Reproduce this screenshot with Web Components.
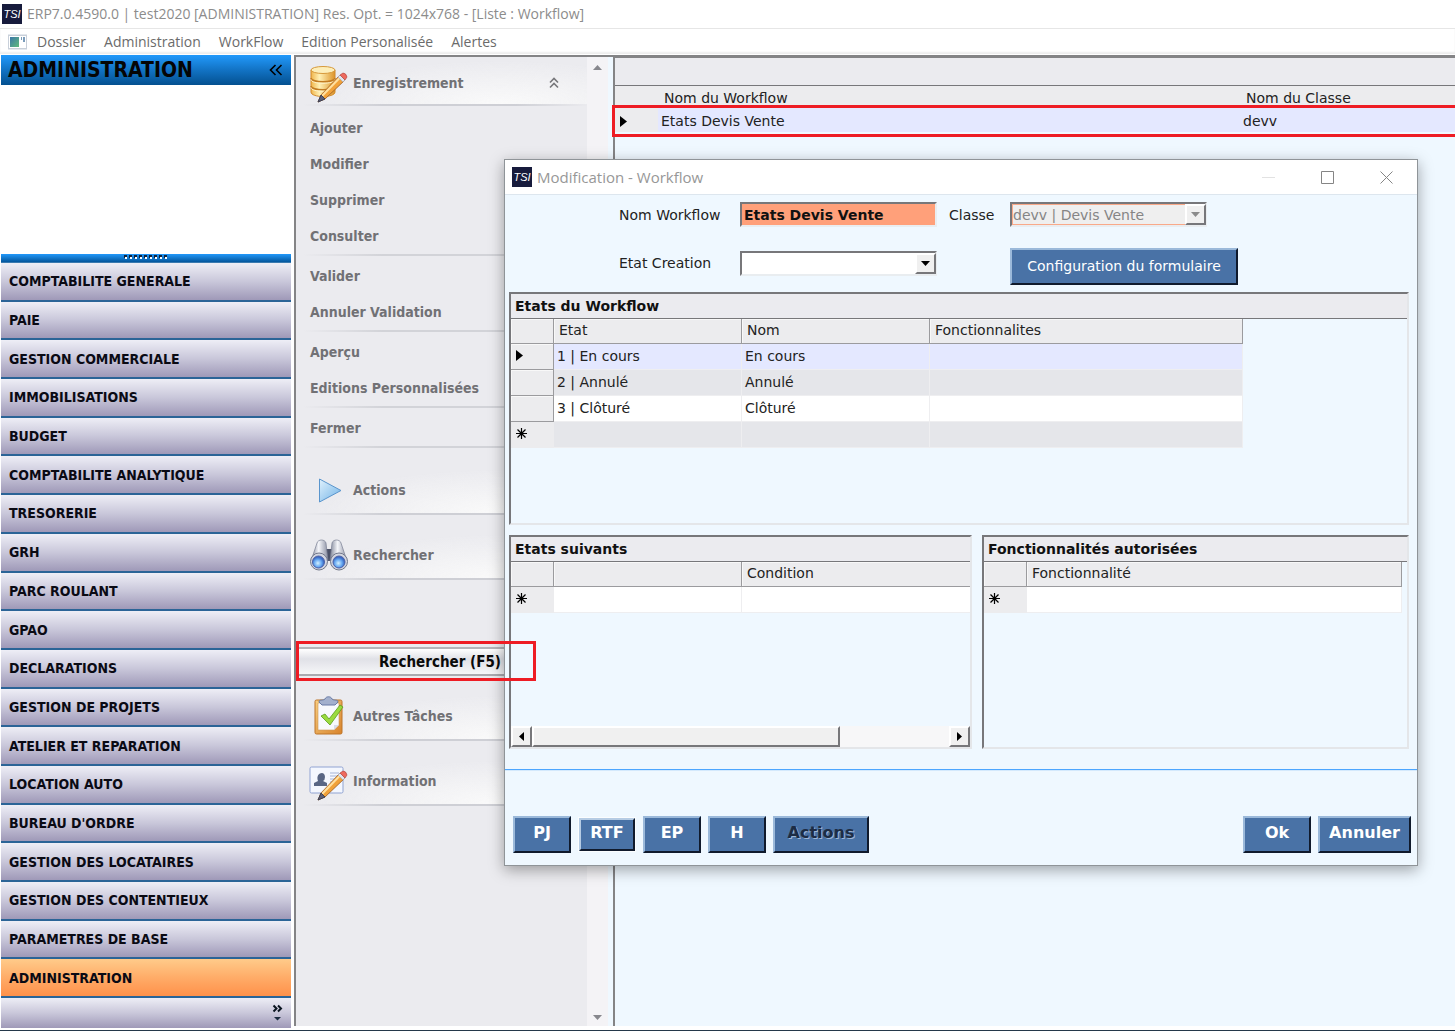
<!DOCTYPE html>
<html lang="fr">
<head>
<meta charset="utf-8">
<meta name="viewport" content="width=device-width, initial-scale=1">
<title>ERP7.0.4590.0 - Workflow</title>
<style>
    html, body {
        height: 100%;
        margin: 0;
    }
    body {
        --ui: "DejaVu Sans", "Liberation Sans", sans-serif;
        --ui-narrow: "DejaVu Sans Condensed", "Noto Sans", sans-serif;
        --system: "Open Sans", "Noto Sans", sans-serif;
        --panel: #ebebef;
        --ice: #eff8ff;
        --line: #848486;
        overflow: hidden;
        font: 14px/16px var(--ui);
        color: #222;
        background: #fff;
    }
</style>
</head>
<body>
<erp-desktop></erp-desktop>

<script>
/* Small dark logo used in the title bars */
class TsiLogo extends HTMLElement {
    connectedCallback() {
        this.attachShadow({ mode: 'open' });
        this.shadowRoot.innerHTML = `
            <style>
                :host {
                    display: flex;
                    align-items: center;
                    justify-content: center;
                    flex: none;
                    width: 20px;
                    height: 20px;
                    overflow: hidden;
                    background: #171b3c;
                    color: #fff;
                    font: italic 11px/20px "Liberation Sans", sans-serif;
                }
            </style>
            <span>TSI</span>
        `;
    }
}
customElements.define('tsi-logo', TsiLogo);

class AppTitle extends HTMLElement {
    connectedCallback() {
        this.attachShadow({ mode: 'open' });
        this.shadowRoot.innerHTML = `
            <style>
                :host {
                    display: flex;
                    align-items: center;
                    gap: 5px;
                    height: 29px;
                    padding-left: 2px;
                    box-sizing: border-box;
                    border-bottom: 1px solid #e6e6e6;
                    color: #8c8c8c;
                    font: 14px/20px var(--system);
                }
            </style>
            <tsi-logo></tsi-logo>
            <span><slot></slot></span>
        `;
    }
}
customElements.define('app-title', AppTitle);

class MenuBar extends HTMLElement {
    connectedCallback() {
        this.attachShadow({ mode: 'open' });
        this.shadowRoot.innerHTML = `
            <style>
                :host {
                    display: block;
                    font: 14px/18px var(--system);
                }
                nav {
                    display: flex;
                    align-items: center;
                    gap: 18px;
                    height: 25px;
                    padding-left: 8px;
                    box-shadow: inset 0 -2px 2px #eee;
                }
                svg {
                    margin-right: -9px;
                }
                a {
                    color: #6b6b6b;
                    text-decoration: none;
                }
            </style>
            <nav>
                <svg width="20" height="16" viewBox="0 0 20 16" aria-hidden="true">
                    <defs><linearGradient id="g" x2="1" y2="1"><stop stop-color="#3c77a8"/><stop offset="1" stop-color="#5fbb7c"/></linearGradient></defs>
                    <path d="M0 .5h19v15H0z" fill="#c9d0da"/>
                    <path d="M1 2h17v12H1z" fill="#fff"/>
                    <path d="M2 3h9v10H2z" fill="url(#g)"/>
                    <path d="M13 3h1v3h-1zM15 3h2v5h-2z" fill="#7b9cba"/>
                </svg>
                <a href="#">Dossier</a>
                <a href="#">Administration</a>
                <a href="#">WorkFlow</a>
                <a href="#">Edition Personalisée</a>
                <a href="#">Alertes</a>
            </nav>
        `;
    }
}
customElements.define('menu-bar', MenuBar);

/* Left navigation */
class NavEntry extends HTMLElement {
    connectedCallback() {
        this.attachShadow({ mode: 'open' });
        this.shadowRoot.innerHTML = `
            <style>
                :host {
                    display: flex;
                    flex: 1;
                    min-height: 0;
                }
                button {
                    flex: 1;
                    padding: 0 0 0 8px;
                    border: 0;
                    border-bottom: 2px solid #2b6497;
                    background: linear-gradient(#eeeef6, #c9c7da 50%, #9f99b8);
                    color: #0a0a14;
                    font: bold 14px/16px var(--ui-narrow);
                    text-align: left;
                }
                :host([active]) button {
                    background: linear-gradient(#ffcb8a, #ffac68 50%, #ff914a);
                }
            </style>
            <button type="button"><slot></slot></button>
        `;
    }
}
customElements.define('nav-entry', NavEntry);

class NavSidebar extends HTMLElement {
    connectedCallback() {
        this.attachShadow({ mode: 'open' });
        this.shadowRoot.innerHTML = `
            <style>
                :host {
                    display: flex;
                    flex-direction: column;
                    padding: 1px 3px 2px 1px;
                }
                header {
                    display: flex;
                    align-items: center;
                    justify-content: space-between;
                    height: 30px;
                    padding: 0 8px 0 7px;
                    box-sizing: border-box;
                    background: linear-gradient(#2299fb, #1273c4 50%, #045090);
                }
                h1 {
                    margin: 0;
                    color: #050505;
                    font: bold 21px/28px var(--ui-narrow);
                }
                button {
                    display: flex;
                    padding: 0;
                    border: 0;
                    background: none;
                }
                .blank {
                    height: 169px;
                }
                .grip {
                    display: flex;
                    justify-content: center;
                    height: 8px;
                    border-bottom: 1px solid #3a7ab0;
                    background: linear-gradient(#2299fb, #04569c);
                }
                .list {
                    display: flex;
                    flex: 1;
                    flex-direction: column;
                    min-height: 0;
                }
                footer {
                    display: flex;
                    justify-content: flex-end;
                    height: 30px;
                    padding: 6px 8px 0 0;
                    box-sizing: border-box;
                    background: linear-gradient(#eeeef6, #c9c7da 50%, #9f99b8);
                }
            </style>
            <header>
                <h1>ADMINISTRATION</h1>
                <button type="button" aria-label="Réduire">
                    <svg width="14" height="12" viewBox="0 0 14 12" fill="none" stroke="#000" stroke-width="1.600"><path d="M6.500 1 1.500 6l5 5M12.500 1l-5 5 5 5"/></svg>
                </button>
            </header>
            <div class="blank"></div>
            <div class="grip">
                <svg width="45" height="6" viewBox="0 0 45 6" aria-hidden="true">
                    <path d="M0 2.500h45" stroke="#10233c" stroke-width="3" stroke-dasharray="3 2"/>
                    <path d="M1 4h44" stroke="#fff" stroke-width="2" stroke-dasharray="2 3"/>
                </svg>
            </div>
            <div class="list"><slot></slot></div>
            <footer>
                <button type="button" aria-label="Configurer">
                    <svg width="11" height="18" viewBox="0 0 11 18"><path d="M1.500 1.500 4.500 4.500l-3 3M6 1.500l3 3-3 3" fill="none" stroke="#0a1420" stroke-width="2"/><path d="M2 13h7l-3.500 3.500z" fill="#1a2a3e"/></svg>
                </button>
            </footer>
        `;
    }
}
customElements.define('nav-sidebar', NavSidebar);

/* Icons of the task groups, all on a 40px square */
const PENCIL = `
    <path d="M31 12 12 32l-3 7 7-3 20-19z" fill="#f1a23a" stroke="#9a5a1e" stroke-width=".8"/>
    <path d="M32.500 13 13 33" stroke="#ffe0a0" stroke-width="2"/>
    <path d="m12 32-3 7 7-3z" fill="#5a5f78" stroke="#3d3f52"/>
    <path d="m29 14 5 5 2-2-5-5z" fill="#dfe4ee" stroke="#9aa0b4" stroke-width=".5"/>
    <path d="m31 12 3-2q3 0 4 4l-2 3z" fill="#ee6a5e" stroke="#b54742" stroke-width=".7"/>`;

const ICONS = {
    database: `
        <defs><linearGradient id="g"><stop stop-color="#f0b54a"/><stop offset=".35" stop-color="#fff0b4"/><stop offset="1" stop-color="#dd9428"/></linearGradient></defs>
        <path d="M2 7v22c0 6 24 6 24 0V7z" fill="url(#g)" stroke="#d28a2a"/>
        <path d="M2 15c0 5 24 5 24 0M2 23c0 5 24 5 24 0" fill="none" stroke="#c37c22" stroke-width="1.500"/>
        <path d="M2 16.500c0 5 24 5 24 0M2 24.500c0 5 24 5 24 0" fill="none" stroke="#fff3cb"/>
        <ellipse cx="14" cy="7" rx="12" ry="3.500" fill="#fdeeb9" stroke="#d79a3c"/>${PENCIL}`,
    play: `
        <defs><linearGradient id="g" y2="1"><stop stop-color="#e0f1fd"/><stop offset="1" stop-color="#6fb2e6"/></linearGradient></defs>
        <path d="M10.500 9v23L32 20.500z" fill="url(#g)" stroke="#5a95cd"/>`,
    binoculars: `
        <defs>
            <linearGradient id="g"><stop stop-color="#7f8598"/><stop offset=".45" stop-color="#f5f6fa"/><stop offset="1" stop-color="#8a8fa2"/></linearGradient>
            <radialGradient id="l" cx=".45" cy=".6"><stop stop-color="#d3f0ff"/><stop offset=".6" stop-color="#69aaf2"/><stop offset="1" stop-color="#3a6ac4"/></radialGradient>
        </defs>
        <path d="M16 14h8v12h-8z" fill="#4a5066"/>
        <path d="M8 8c1-4 8-4 9 0l2 18H2z" fill="url(#g)" stroke="#7a8094" stroke-width=".7"/>
        <path d="M23 8c1-4 8-4 9 0l6 18H21z" fill="url(#g)" stroke="#7a8094" stroke-width=".7"/>
        <circle cx="10" cy="26.500" r="8.500" fill="#d3d6e0" stroke="#71778a"/>
        <circle cx="30" cy="26.500" r="8.500" fill="#d3d6e0" stroke="#71778a"/>
        <circle cx="9.500" cy="27" r="6" fill="url(#l)" stroke="#4c60a6"/>
        <circle cx="30" cy="27" r="6" fill="url(#l)" stroke="#4c60a6"/>`,
    clipboard: `
        <defs><linearGradient id="g" x2="1" y2="1"><stop stop-color="#f8ce80"/><stop offset="1" stop-color="#d8832c"/></linearGradient></defs>
        <rect x="6" y="4" width="27" height="34" rx="1.500" fill="url(#g)" stroke="#bd7429"/>
        <path d="M9 7h21v22l-5 5H9z" fill="#f8f9fd" stroke="#cf9857" stroke-width=".6"/>
        <path d="M30 29h-5v5" fill="#d9dcea"/>
        <path d="M10 6c0-3 4-1 6-3 1-3 6-3 7 0 2 2 6 0 6 3l-3 3H13z" fill="#a3b0cd" stroke="#687ba6"/>
        <path d="m12 20 4-2 4 5L31 9l3 2-13 18z" fill="#9bdb3f" stroke="#5c9c20" stroke-width=".8"/>`,
    card: `
        <rect x="1" y="6" width="33" height="26" rx="1.500" fill="#f4f7fe" stroke="#90a3d2"/>
        <path d="M5 25v-3l4-2c-3-8 7-11 7-4q0 3-2 4l4 2v3z" fill="#596684"/>
        <path d="M21 12h9M21 15h9M21 18h8M21 21h5" stroke="#a5b4d7"/>${PENCIL}`
};

class TaskGroup extends HTMLElement {
    connectedCallback() {
        this.attachShadow({ mode: 'open' });
        this.shadowRoot.innerHTML = `
            <style>
                :host {
                    display: block;
                    margin-top: 16px;
                }
                :host([first]) {
                    margin-top: 0;
                }
                header {
                    display: flex;
                    align-items: center;
                    gap: 4px;
                    height: 49px;
                    padding: 1px 28px 0 13px;
                    box-sizing: border-box;
                    border-bottom: 2px solid;
                    border-image: linear-gradient(90deg, transparent 3%, #cecfd5 30%, #cecfd5 75%, transparent) 2;
                    background: radial-gradient(ellipse at 70% 100%, #fafafa, transparent 65%);
                }
                :host([first]) header {
                    padding-top: 4px;
                }
                h2 {
                    flex: 1;
                    margin: 0;
                    font: bold 14px/16px var(--ui-narrow);
                    color: #717175;
                }
                button {
                    display: flex;
                    padding: 0;
                    border: 0;
                    background: none;
                }
            </style>
            <header>
                <svg width="40" height="40" viewBox="0 0 40 40" aria-hidden="true">${ICONS[this.getAttribute('icon')]}</svg>
                <h2>${this.getAttribute('label')}</h2>
                ${this.hasAttribute('first') ? `
                <button type="button" aria-label="Replier">
                    <svg width="10" height="12" viewBox="0 0 10 12" fill="none" stroke="#77777b" stroke-width="1.600"><path d="m1 5.500 4-4 4 4M1 10.500l4-4 4 4"/></svg>
                </button>` : ''}
            </header>
            <slot></slot>
        `;
    }
}
customElements.define('task-group', TaskGroup);

class TaskLink extends HTMLElement {
    connectedCallback() {
        this.attachShadow({ mode: 'open' });
        this.shadowRoot.innerHTML = `
            <style>
                :host {
                    display: block;
                }
                a {
                    display: block;
                    padding-left: 14px;
                    color: #717175;
                    font: bold 14px/36px var(--ui-narrow);
                    text-decoration: none;
                }
                :host([last]) {
                    padding-bottom: 2px;
                }
                :host([last]) a {
                    border-bottom: 2px solid;
                    border-image: linear-gradient(90deg, transparent 3%, #d2d3d8 30%, #d2d3d8 75%, transparent) 2;
                }
            </style>
            <a href="#"><slot></slot></a>
        `;
    }
}
customElements.define('task-link', TaskLink);

class TaskPanel extends HTMLElement {
    connectedCallback() {
        this.attachShadow({ mode: 'open' });
        this.shadowRoot.innerHTML = `
            <style>
                :host {
                    display: flex;
                    box-sizing: border-box;
                    border-top: 2px solid var(--line);
                    border-left: 2px solid var(--line);
                    background: var(--ice);
                }
                .tasks {
                    flex: 1;
                    background: var(--panel);
                }
                .links {
                    padding-top: 4px;
                }
                .search {
                    display: block;
                    width: 100%;
                    height: 29px;
                    margin: 67px 0 14px;
                    padding: 0 86px 0 0;
                    border: 0;
                    border-top: 2px solid #b5b5ba;
                    border-bottom: 2px solid #aaaab0;
                    background: linear-gradient(#fff, #e0e1e7 40%, #f6f6f8);
                    color: #0a0a0a;
                    font: bold 15px/18px var(--ui-narrow);
                    text-align: right;
                }
                .scroll {
                    display: flex;
                    flex-direction: column;
                    justify-content: space-between;
                    align-items: center;
                    width: 21px;
                    margin-right: 5px;
                    padding: 8px 0 6px;
                    background: #f4f3f6;
                }
            </style>
            <div class="tasks">
                <task-group first icon="database" label="Enregistrement">
                    <div class="links">
                        <task-link>Ajouter</task-link>
                        <task-link>Modifier</task-link>
                        <task-link>Supprimer</task-link>
                        <task-link last>Consulter</task-link>
                        <task-link>Valider</task-link>
                        <task-link last>Annuler Validation</task-link>
                        <task-link>Aperçu</task-link>
                        <task-link last>Editions Personnalisées</task-link>
                        <task-link last>Fermer</task-link>
                    </div>
                </task-group>
                <task-group icon="play" label="Actions"></task-group>
                <task-group icon="binoculars" label="Rechercher"></task-group>
                <button class="search" type="button">Rechercher (F5)</button>
                <task-group icon="clipboard" label="Autres Tâches"></task-group>
                <task-group icon="card" label="Information"></task-group>
            </div>
            <div class="scroll" aria-hidden="true">
                <svg width="9" height="5"><path d="M0 5 4.500 0 9 5z" fill="#87878d"/></svg>
                <svg width="9" height="5"><path d="M0 0h9L4.500 5z" fill="#87878d"/></svg>
            </div>
        `;
    }
}
customElements.define('task-panel', TaskPanel);

/* Workflow list behind the dialog */
class WorkflowList extends HTMLElement {
    connectedCallback() {
        this.attachShadow({ mode: 'open' });
        this.shadowRoot.innerHTML = `
            <style>
                :host {
                    display: block;
                    box-sizing: border-box;
                    border-top: 3px solid var(--line);
                    border-left: 2px solid var(--line);
                    background: var(--ice);
                }
                .bar {
                    height: 27px;
                    border-bottom: 1px solid #77777a;
                    background: var(--panel);
                }
                table {
                    width: 100%;
                    table-layout: fixed;
                    border-collapse: collapse;
                }
                th, td {
                    height: 20px;
                    padding: 2px 3px 0;
                    font-weight: normal;
                    text-align: left;
                }
                th {
                    padding-left: 6px;
                    background: #ececee;
                }
                td {
                    height: 22px;
                    background: #e4e8ff;
                }
                td:first-child {
                    padding-left: 5px;
                    background: #ececee;
                }
                svg {
                    display: block;
                }
            </style>
            <div class="bar"></div>
            <table>
                <colgroup><col style="width: 43px"><col style="width: 582px"><col></colgroup>
                <thead><tr><th></th><th>Nom du Workflow</th><th>Nom du Classe</th></tr></thead>
                <tbody><tr><td><svg width="7" height="11"><path d="M0 0v11l7-5.500z"/></svg></td><td>Etats Devis Vente</td><td>devv</td></tr></tbody>
            </table>
        `;
    }
}
customElements.define('workflow-list', WorkflowList);

class ErpButton extends HTMLElement {
    connectedCallback() {
        this.attachShadow({ mode: 'open' });
        this.shadowRoot.innerHTML = `
            <style>
                :host {
                    display: inline-flex;
                    height: 37px;
                }
                button {
                    flex: 1;
                    padding: 0 0 3px;
                    border: 2px solid;
                    border-color: #9bb9da #101a2c #101a2c #9bb9da;
                    background: #4972a6;
                    color: #fff;
                    font: bold 16px/20px var(--ui);
                }
                :host([plain]) button {
                    padding: 0;
                    font: 14px/16px var(--ui);
                }
                :host([focused]) {
                    height: 33px;
                }
                :host([focused]) button {
                    border-color: #b6cce4 #101a2c #101a2c #b6cce4;
                    box-shadow: 0 0 0 1px #fbfdfe;
                }
                button:disabled {
                    color: #1d2c44;
                    text-shadow: 1px 1px #9cb6d6;
                }
            </style>
            <button type="button" ${this.hasAttribute('disabled') ? 'disabled' : ''}><slot></slot></button>
        `;
    }
}
customElements.define('erp-button', ErpButton);

class WorkflowForm extends HTMLElement {
    connectedCallback() {
        this.attachShadow({ mode: 'open' });
        this.shadowRoot.innerHTML = `
            <style>
                :host {
                    display: block;
                }
                form {
                    display: grid;
                    grid-template-columns: 121px 197px 73px 228px;
                    grid-template-rows: 39px 58px;
                    align-items: center;
                    margin-left: 114px;
                }
                .classe {
                    padding-left: 12px;
                }
                input, select {
                    width: 100%;
                    height: 25px;
                    padding: 0 2px;
                    box-sizing: border-box;
                    border: 2px solid;
                    border-color: #77777a #e9edf0 #e9edf0 #77777a;
                    border-radius: 0;
                    outline: 0;
                    background: #fff;
                    color: #111;
                    font: 14px/16px var(--ui);
                }
                input {
                    background: #ffa07a;
                    font-weight: bold;
                }
                select {
                    appearance: none;
                }
                select:disabled {
                    opacity: 1;
                    padding: 0 1px;
                    background: #efefef;
                    box-shadow: inset 0 0 0 1px #f9a989;
                    color: #858585;
                }
                .combo {
                    display: grid;
                    width: 197px;
                }
                .combo > * {
                    grid-area: 1 / 1;
                }
                .combo i {
                    display: flex;
                    align-items: center;
                    justify-content: center;
                    justify-self: end;
                    align-self: center;
                    width: 21px;
                    height: 21px;
                    margin-right: 1px;
                    box-sizing: border-box;
                    border: 2px solid;
                    border-color: #fff #77777a #77777a #fff;
                    background: #f0f0f0;
                    pointer-events: none;
                }
                .etat {
                    grid-row: 2;
                }
                erp-button {
                    grid-column: 4;
                    margin-top: 6px;
                }
            </style>
            <form>
                <label for="nom">Nom Workflow</label>
                <input id="nom" type="text" value="Etats Devis Vente">
                <label class="classe" for="classe">Classe</label>
                <div class="combo">
                    <select id="classe" disabled><option>devv | Devis Vente</option></select>
                    <i><svg width="9" height="5"><path d="M0 0h9L4.500 5z" fill="#8b8b8b"/></svg></i>
                </div>
                <label class="etat" for="etat">Etat Creation</label>
                <div class="combo">
                    <select id="etat"><option></option></select>
                    <i><svg width="9" height="5"><path d="M0 0h9L4.500 5z"/></svg></i>
                </div>
                <erp-button plain>Configuration du formulaire</erp-button>
            </form>
        `;
    }
}
customElements.define('workflow-form', WorkflowForm);

/* Sunken panel with a caption; the grid goes in the slot */
class GridPanel extends HTMLElement {
    connectedCallback() {
        this.attachShadow({ mode: 'open' });
        this.shadowRoot.innerHTML = `
            <style>
                :host {
                    display: flex;
                    flex-direction: column;
                    min-width: 0;
                    box-sizing: border-box;
                    overflow: hidden;
                    border: 2px solid;
                    border-color: #77777a #e4e6e9 #e4e6e9 #77777a;
                    background: var(--ice);
                }
                h3 {
                    margin: 0;
                    padding: 0 4px;
                    border-bottom: 1px solid #77777a;
                    background: var(--panel);
                    color: #111;
                    font: bold 14px/24px var(--ui);
                }
            </style>
            <h3>${this.getAttribute('caption')}</h3>
            <slot></slot>
        `;
    }
}
customElements.define('grid-panel', GridPanel);

class DataGrid extends HTMLElement {
    connectedCallback() {
        const columns = JSON.parse(this.getAttribute('columns'));
        const rows = JSON.parse(this.getAttribute('rows') || '[]');
        const arrow = '<svg width="7" height="11"><path d="M0 0v11l7-5.500z"/></svg>';
        const star = '<svg width="11" height="11" stroke="#000" stroke-width="1.200"><path d="M5.500 0v11M0 5.500h11M1.500 1.500l8 8M9.500 1.500l-8 8"/></svg>';

        this.attachShadow({ mode: 'open' });
        this.shadowRoot.innerHTML = `
            <style>
                :host {
                    display: block;
                }
                table {
                    width: 100%;
                    table-layout: fixed;
                    border-collapse: separate;
                    border-spacing: 0;
                }
                th, td {
                    height: 26px;
                    padding: 0 3px 2px;
                    box-sizing: border-box;
                    font-weight: normal;
                    text-align: left;
                    white-space: nowrap;
                }
                thead th {
                    height: 25px;
                    padding-left: 5px;
                }
                th {
                    border-right: 1px solid #9b9b9e;
                    border-bottom: 1px solid #9b9b9e;
                    background: #ececee;
                    box-shadow: inset 1px 1px #f8f8f8;
                }
                tbody tr:last-child th {
                    border-color: #ececee;
                    box-shadow: none;
                }
                tbody th svg {
                    display: block;
                    margin-left: 2px;
                }
                td {
                    border-right: 1px solid #eeeef0;
                    border-bottom: 1px solid #eeeef0;
                    background: #fff;
                }
                tr:nth-child(even) td {
                    background: #e5e6ea;
                }
                tr.current td {
                    background: #e4e8ff;
                }
            </style>
            <table>
                <colgroup><col style="width: 43px">${columns.map(c => `<col${c[1] ? ` style="width: ${c[1]}px"` : ''}>`).join('')}</colgroup>
                <thead><tr><th></th>${columns.map(c => `<th>${c[0]}</th>`).join('')}</tr></thead>
                <tbody>
                    ${rows.map((r, i) => `<tr${i ? '' : ' class="current"'}><th>${i ? '' : arrow}</th>${r.map(v => `<td>${v}</td>`).join('')}</tr>`).join('')}
                    <tr><th>${star}</th>${columns.map(() => '<td></td>').join('')}</tr>
                </tbody>
            </table>
        `;
    }
}
customElements.define('data-grid', DataGrid);

class HScroll extends HTMLElement {
    connectedCallback() {
        this.attachShadow({ mode: 'open' });
        this.shadowRoot.innerHTML = `
            <style>
                :host {
                    display: flex;
                    height: 21px;
                    margin-top: auto;
                    background: #f7f7f8;
                }
                button, .thumb {
                    display: flex;
                    align-items: center;
                    justify-content: center;
                    flex: none;
                    width: 21px;
                    padding: 0;
                    box-sizing: border-box;
                    border: 2px solid;
                    border-color: #fff #77777a #77777a #fff;
                    background: #f0f0f0;
                }
                .thumb {
                    width: 67%;
                }
                .track {
                    flex: 1;
                }
            </style>
            <button type="button" aria-label="Gauche"><svg width="5" height="9"><path d="M5 0v9L0 4.500z"/></svg></button>
            <div class="thumb"></div>
            <div class="track"></div>
            <button type="button" aria-label="Droite"><svg width="5" height="9"><path d="M0 0v9l5-4.500z"/></svg></button>
        `;
    }
}
customElements.define('h-scroll', HScroll);

class WorkflowDialog extends HTMLElement {
    connectedCallback() {
        this.attachShadow({ mode: 'open' });
        this.shadowRoot.innerHTML = `
            <style>
                :host {
                    display: block;
                    box-sizing: border-box;
                    border: 1px solid #8f9498;
                    background: var(--ice);
                    box-shadow: 0 4px 14px rgba(0, 0, 0, .35);
                }
                header {
                    display: flex;
                    align-items: center;
                    gap: 5px;
                    height: 34px;
                    padding: 0 24px 0 7px;
                    border-bottom: 1px solid #dde6ee;
                    background: #fff;
                }
                h2 {
                    flex: 1;
                    margin: 0;
                    color: #979797;
                    font: 15px/20px var(--system);
                }
                .controls {
                    display: flex;
                    gap: 46px;
                }
                .controls button {
                    display: flex;
                    padding: 0;
                    border: 0;
                    background: none;
                }
                .panels {
                    display: grid;
                    grid-template-columns: 463fr 427fr;
                    gap: 10px;
                    padding: 0 8px 20px 4px;
                    border-bottom: 1px solid #4da6ff;
                    box-shadow: 0 1px #d4e9fc;
                }
                .wide {
                    grid-column: 1 / 3;
                    height: 233px;
                }
                .half {
                    height: 214px;
                }
                .etats {
                    width: 732px;
                }
                .suivants {
                    width: 700px;
                }
                .droits {
                    margin-right: 5px;
                }
                footer {
                    display: flex;
                    align-items: center;
                    gap: 7px;
                    padding: 46px 6px 12px 8px;
                }
                .small {
                    width: 58px;
                }
                .rtf {
                    width: 56px;
                    margin: 0 1px;
                }
                .actions {
                    width: 96px;
                }
                .ok {
                    width: 68px;
                    margin-left: auto;
                }
                .cancel {
                    width: 93px;
                }
            </style>
            <header>
                <tsi-logo></tsi-logo>
                <h2>Modification - Workflow</h2>
                <div class="controls">
                    <button type="button" aria-label="Réduire"><svg width="13" height="13" stroke="#e2e2e2"><path d="M0 6.500h13"/></svg></button>
                    <button type="button" aria-label="Agrandir"><svg width="13" height="13" fill="none" stroke="#858585"><path d="M.5 .5h12v12H.5z"/></svg></button>
                    <button type="button" aria-label="Fermer"><svg width="13" height="13" stroke="#858585"><path d="m.5 .5 12 12M12.500 .5l-12 12"/></svg></button>
                </div>
            </header>
            <workflow-form></workflow-form>
            <div class="panels">
                <grid-panel class="wide" caption="Etats du Workflow">
                    <data-grid class="etats"
                        columns='[["Etat", 188], ["Nom", 188], ["Fonctionnalites"]]'
                        rows='[["1 | En cours", "En cours", ""], ["2 | Annulé", "Annulé", ""], ["3 | Clôturé", "Clôturé", ""]]'></data-grid>
                </grid-panel>
                <grid-panel class="half" caption="Etats suivants">
                    <data-grid class="suivants" columns='[["", 188], ["Condition"]]'></data-grid>
                    <h-scroll></h-scroll>
                </grid-panel>
                <grid-panel class="half" caption="Fonctionnalités autorisées">
                    <data-grid class="droits" columns='[["Fonctionnalité"]]'></data-grid>
                </grid-panel>
            </div>
            <footer>
                <erp-button class="small">PJ</erp-button>
                <erp-button class="rtf" focused>RTF</erp-button>
                <erp-button class="small">EP</erp-button>
                <erp-button class="small">H</erp-button>
                <erp-button class="actions" disabled>Actions</erp-button>
                <erp-button class="ok">Ok</erp-button>
                <erp-button class="cancel">Annuler</erp-button>
            </footer>
        `;
    }
}
customElements.define('workflow-dialog', WorkflowDialog);

class ErpDesktop extends HTMLElement {
    connectedCallback() {
        this.attachShadow({ mode: 'open' });
        this.shadowRoot.innerHTML = `
            <style>
                :host {
                    display: flex;
                    flex-direction: column;
                    position: relative;
                    height: 100%;
                    box-sizing: border-box;
                    overflow: hidden;
                    border-bottom: 1px solid #24384a;
                }
                main {
                    display: grid;
                    grid-template-columns: 294px 319px 1fr;
                    flex: 1;
                    min-height: 0;
                }
                task-panel, workflow-list {
                    min-height: 0;
                    margin: 1px 0 4px;
                }
                workflow-dialog {
                    position: absolute;
                    top: 159px;
                    left: 504px;
                    width: 914px;
                }
                /* red highlight frames, laid over everything */
                .mark {
                    position: absolute;
                    box-sizing: border-box;
                    border: 3px solid #ee1c24;
                    pointer-events: none;
                }
                .mark.row {
                    top: 105px;
                    left: 612px;
                    right: -3px;
                    height: 32px;
                }
                .mark.search {
                    top: 641px;
                    left: 296px;
                    width: 240px;
                    height: 40px;
                }
            </style>
            <app-title>ERP7.0.4590.0 | test2020 [ADMINISTRATION] Res. Opt. = 1024x768 - [Liste : Workflow]</app-title>
            <menu-bar></menu-bar>
            <main>
                <nav-sidebar>
                    <nav-entry>COMPTABILITE GENERALE</nav-entry>
                    <nav-entry>PAIE</nav-entry>
                    <nav-entry>GESTION COMMERCIALE</nav-entry>
                    <nav-entry>IMMOBILISATIONS</nav-entry>
                    <nav-entry>BUDGET</nav-entry>
                    <nav-entry>COMPTABILITE ANALYTIQUE</nav-entry>
                    <nav-entry>TRESORERIE</nav-entry>
                    <nav-entry>GRH</nav-entry>
                    <nav-entry>PARC ROULANT</nav-entry>
                    <nav-entry>GPAO</nav-entry>
                    <nav-entry>DECLARATIONS</nav-entry>
                    <nav-entry>GESTION DE PROJETS</nav-entry>
                    <nav-entry>ATELIER ET REPARATION</nav-entry>
                    <nav-entry>LOCATION AUTO</nav-entry>
                    <nav-entry>BUREAU D'ORDRE</nav-entry>
                    <nav-entry>GESTION DES LOCATAIRES</nav-entry>
                    <nav-entry>GESTION DES CONTENTIEUX</nav-entry>
                    <nav-entry>PARAMETRES DE BASE</nav-entry>
                    <nav-entry active>ADMINISTRATION</nav-entry>
                </nav-sidebar>
                <task-panel></task-panel>
                <workflow-list></workflow-list>
            </main>
            <workflow-dialog></workflow-dialog>
            <div class="mark row"></div>
            <div class="mark search"></div>
        `;
    }
}
customElements.define('erp-desktop', ErpDesktop);
</script>
</body>
</html>
